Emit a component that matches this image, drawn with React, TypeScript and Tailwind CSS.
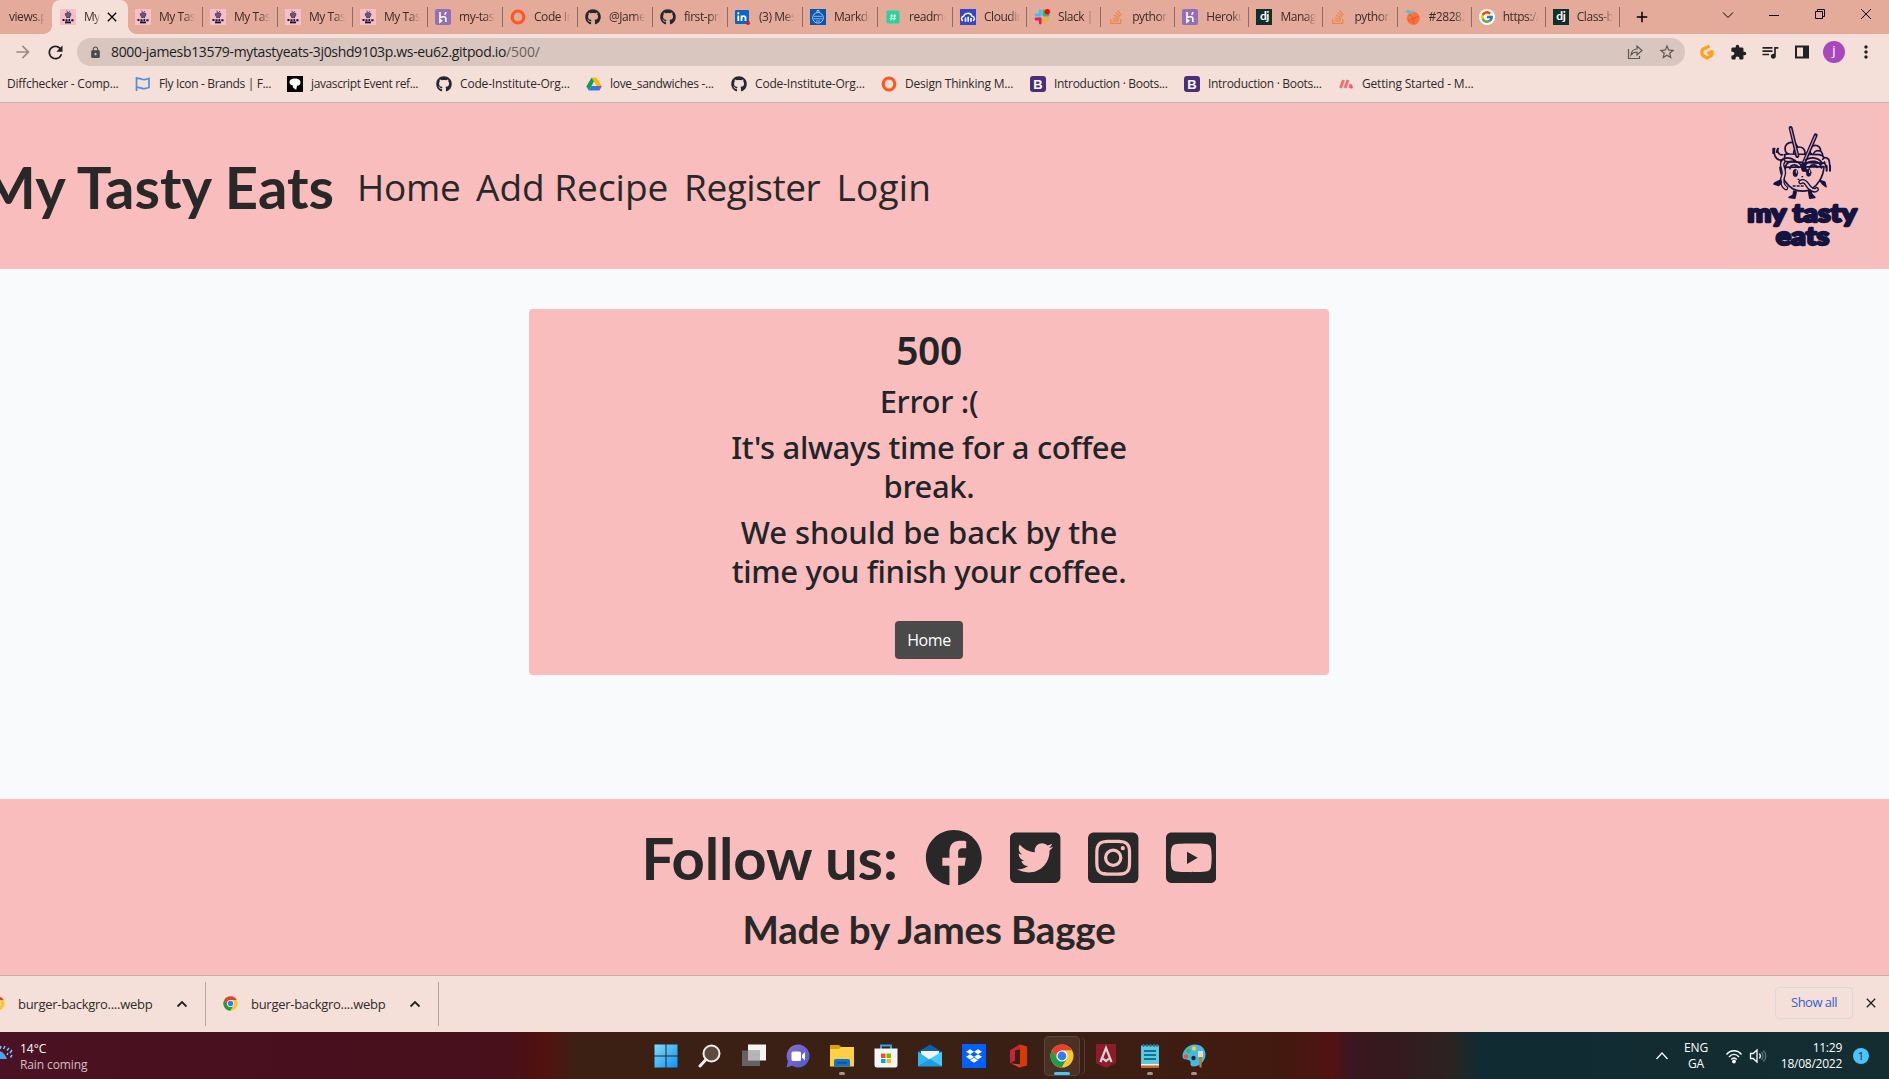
import React from "react";
import { FaFacebook, FaTwitterSquare, FaInstagramSquare, FaYoutubeSquare, FaGithub, FaStackOverflow, FaDropbox } from "react-icons/fa";
import { FcGoogle } from "react-icons/fc";
import { MdRefresh, MdArrowForward, MdLock, MdStarOutline, MdQueueMusic, MdMoreVert, MdAdd, MdClose, MdExtension } from "react-icons/md";

const NAVY = "#15133f";

/* ---------- Brand logo ---------- */

function NoodleBowl() {
  return (
    <g fill="none" stroke={NAVY} strokeLinecap="round" strokeLinejoin="round">
      <g fill="#f5bfbf" strokeWidth="5">
        <circle cx="154" cy="92" r="19" />
        <circle cx="178" cy="104" r="17" />
        <circle cx="226" cy="98" r="16" />
        <circle cx="234" cy="112" r="14" />
        <path d="M122 130c0-14 12-24 26-22l90 2c12 2 20 12 16 26z" />
        <path d="M248 124c6-10 20-4 20 8l2 14M244 138c6-6 14-2 14 10" />
        <path d="M104 92c-4 16 2 32 16 34 10 2 16-6 14-14M112 96c2 12 10 16 16 14" />
      </g>
      <path d="M100 92v14M114 92l-4 10M260 144v14M270 144v14" strokeWidth="6" />
      <path d="M152 30l20 84M227 52l-36 84" strokeWidth="12" />
      <path d="M152 32l20 80M226 54l-34 78" stroke="#d99aa5" strokeWidth="3.5" />
      <path d="M120 148c2 32 24 56 38 64 18 10 44 10 58 0 16-10 34-34 36-66z" fill="#f5bfbf" strokeWidth="5" />
      <path d="M136 152c0-22 30-32 46-12l6 18 8-16c14-20 46-14 48 8M150 152c0-12 18-16 26-4M208 150c4-12 20-12 24-2M122 128c14-12 30-10 44 0M196 126c18-10 38-8 50 8" strokeWidth="5" />
      <path d="M184 140l6 20h10l-4-22z" fill={NAVY} strokeWidth="3" />
      <ellipse cx="166" cy="165" rx="7" ry="11" fill={NAVY} strokeWidth="2" />
      <ellipse cx="206" cy="164" rx="7" ry="11" fill={NAVY} strokeWidth="2" />
      <path d="M169 158v7M209 157v7" stroke="#f5bfbf" strokeWidth="3" />
      <path d="M186 176h2M174 184h3M178 190l8-4" strokeWidth="4" />
      <path d="M130 130c-12 14 8 26 0 42-6 14-4 32 8 38" strokeWidth="14" />
      <path d="M130 130c-12 14 8 26 0 42-6 14-4 32 8 38" stroke="#f5bfbf" strokeWidth="6" />
      <path d="M182 192c14-8 18 8 26 16 8 8 16 12 22 6" strokeWidth="14" />
      <path d="M182 192c14-8 18 8 26 16 8 8 16 12 22 6" stroke="#f5bfbf" strokeWidth="6" />
      <path d="M160 204h36" strokeWidth="5" strokeDasharray="5 7" />
      <path d="M122 186l-16 8-4 4 14 4 8-8zM240 188l10 12 8 6-4-14z" fill={NAVY} strokeWidth="5" />
      <path d="M162 220l-2 12-12 6 16 2 4-18zM206 218l4 22 14-2-10-10-2-10z" fill={NAVY} strokeWidth="6" />
    </g>
  );
}

function BrandLogo() {
  return (
    <div className="h-[152px] w-[150px] bg-[#f5bfbf] pt-2 pl-[13px]">
      <svg viewBox="0 0 378 405" className="h-[135px] w-[126px]">
        <NoodleBowl />
        <g fill={NAVY} stroke={NAVY} strokeWidth="7" strokeLinejoin="round" fontFamily="Lato, sans-serif" fontWeight="900" fontSize="76">
          <text x="22" y="311" textLength="328" lengthAdjust="spacingAndGlyphs">my tasty</text>
          <text x="107" y="380" textLength="161" lengthAdjust="spacingAndGlyphs">eats</text>
        </g>
      </svg>
    </div>
  );
}

/* ---------- Favicons ---------- */

const TastyIcon = () => (
  <svg viewBox="0 0 16 16" className="size-4">
    <path d="M0 0h16v16H0z" fill="#f5bfc4" />
    <path d="M6.800 1.500 7.800 4M9.800 2 8.300 4M5.200 4.800l1.400-.8 1.800.3 2-.3.600 1.200-.8 2.300-1.400.8H7.200L5.800 7.200z" fill="#6c5683" stroke="#4a3a66" strokeWidth=".8" />
    <path d="M6.500 8.600h1M8.800 8.600h1" stroke={NAVY} />
    <path d="M2.500 11h2M5.500 11.300h2M8.500 11h1.600M11.300 11.300h2.200" stroke={NAVY} strokeWidth="1.900" />
    <path d="M5 13.400h6" stroke={NAVY} strokeWidth="1.900" />
  </svg>
);
const HerokuIcon = () => (
  <svg viewBox="0 0 16 16" className="size-4">
    <rect width="16" height="16" rx="2" fill="#9270b8" />
    <path d="M5 3v5.600c2-1 5.800-1.500 5.800 1V13M10.800 3c0 1.200-.4 2-1.200 2.800M5 10.500V13l1.500-1.200z" stroke="#fff" strokeWidth="1.600" fill="none" />
  </svg>
);
const RingIcon = () => (
  <svg viewBox="0 0 16 16" className="size-4">
    <ellipse cx="8" cy="8" rx="5.800" ry="6" fill="none" stroke="#ff5722" strokeWidth="3.200" />
  </svg>
);
const GithubIcon = () => <FaGithub className="size-4 text-[#24292f]" />;
const LinkedinIcon = () => (
  <svg viewBox="0 0 16 16" className="size-4">
    <rect y="1" width="14" height="14" rx="1" fill="#0a66c2" />
    <path d="M3.300 6.500V12M6.500 12V6.500M6.500 9c0-2.600 4-2.600 4 0v3" stroke="#fff" strokeWidth="1.800" fill="none" />
    <circle cx="3.300" cy="4.300" r="1.100" fill="#fff" />
    <circle cx="13" cy="14" r="2" fill="#e0131a" />
  </svg>
);
const MarkdownIcon = () => (
  <svg viewBox="0 0 16 16" className="size-4">
    <path d="M0 0h16v16H0z" fill="#0b56ad" />
    <g fill="none" stroke="#a9cdf2">
      <circle cx="8" cy="8.800" r="5.300" />
      <path d="M4 7.300h8M4 9.800h8M6 12h4" strokeWidth=".8" />
      <path d="M7 3.300V1.500h2v1.800" />
    </g>
  </svg>
);
const HashIcon = () => (
  <svg viewBox="0 0 16 16" className="size-4">
    <rect x="1.500" y="1.500" width="13" height="13" rx="1.500" fill="#2fd09a" />
    <path d="M7 5 6 11.500M10 5 9 11.500M5 7h6M4.800 9.600h6" stroke="#c9ffe9" fill="none" />
  </svg>
);
const CloudinaryIcon = () => (
  <svg viewBox="0 0 16 16" className="size-4">
    <path d="M0 0h16v16H0z" fill="#3448c5" />
    <path d="M3 11.800C.7 10.800 1 7.600 3.600 7.200 4.500 3.800 10.600 3 11.800 7c3 .4 3.300 4 1.200 4.800" fill="none" stroke="#fff" strokeWidth="1.400" />
    <path d="M5.500 8.500v4.300M8.200 7.800v5M11 9v3.800" stroke="#fff" strokeWidth="1.600" />
  </svg>
);
const SlackIcon = () => (
  <svg viewBox="0 0 16 16" className="size-4" strokeWidth="2.800" strokeLinecap="round">
    <path d="M6.200 2v4M2 6h4" stroke="#36c5f0" />
    <path d="M10 2v4M10 6h4" stroke="#2eb67d" />
    <path d="M10 10v4M10 10h4" stroke="#ecb22e" />
    <path d="M6.200 10v4M2 10h4" stroke="#e01e5a" />
    <circle cx="13.300" cy="2.700" r="2.700" fill="#f00" stroke="none" />
  </svg>
);
const StackIcon = () => <FaStackOverflow className="size-4 text-[#ee8746]" />;
const DjangoIcon = () => (
  <span className="flex size-4 items-center justify-center bg-[#12302b] pb-0.5 font-['Lato'] text-[12px] leading-none font-bold text-white">dj</span>
);
const OrangeIcon = () => (
  <svg viewBox="0 0 16 16" className="size-4">
    <circle cx="8.300" cy="9.300" r="6.500" fill="#ff6f3d" />
    <path d="M8.300 9.300 4 5M8.300 9.300l5.500-2M8.300 9.300 9 15.500M8.300 9.300 3 12" stroke="#e35b2c" />
    <path d="M1 2c3-1 6 0 7 2.400C5 5 2 4.500 1 2zM7.500 3 9 .5" fill="#6bb8c9" stroke="#6bb8c9" strokeWidth=".8" />
  </svg>
);
const GoogleIcon = () => (
  <span className="flex size-4 items-center justify-center rounded-full bg-white"><FcGoogle className="size-3.5" /></span>
);
const FlyIcon = () => (
  <svg viewBox="0 0 16 16" className="size-4">
    <path d="M1.500 1v14M1.500 2.500c3.500-1 5.500 1.500 8 1.200 1.500-.2 3-.7 4.500-1.200v9c-1.500.5-3 1-4.500 1.200-2.500.3-4.500-1.700-8-1.200" fill="none" stroke="#4f8fd8" strokeWidth="1.700" />
  </svg>
);
const JsEventIcon = () => (
  <svg viewBox="0 0 16 16" className="size-4">
    <path d="M0 0h16v16H0z" />
    <path d="M2.500 6.500c0-3 2.500-4 5.500-4s5.500 1 5.500 4c0 2.500-1.500 3.200-3.500 3.200L9.200 14 6 11.500 5.500 9.300C3.500 9 2.500 8 2.500 6.500z" fill="#fff" />
  </svg>
);
const DriveIcon = () => (
  <svg viewBox="0 0 16 16" className="size-4">
    <path d="M5.600 1.500h4.800L15.700 10h-5z" fill="#ffba00" />
    <path d="M5.600 1.500.3 10.500l2.500 4L8 5.500z" fill="#0f9d58" />
    <path d="M5.200 10h10.500l-2.400 4.500H2.800z" fill="#2f75f0" />
    <path d="m12.200 12.300 1 2.200 2.500-4.500z" fill="#ea4335" />
  </svg>
);
const BootstrapIcon = () => (
  <span className="flex size-4 items-center justify-center rounded-[3px] bg-[#4a2e78] font-['Liberation_Sans'] text-[13px] leading-none font-bold text-white">B</span>
);
const MaterialIcon = () => (
  <svg viewBox="0 0 16 16" className="size-4">
    <path d="m2.500 12 3-8M7 12l3-8M12 12l1-4" stroke="#f4717c" strokeWidth="3" />
    <circle cx="13.500" cy="11" r="1.500" fill="#ee5a66" />
  </svg>
);
const ChromeIcon = ({ className }: { className: string }) => (
  <svg viewBox="0 0 24 24" className={className}>
    <circle cx="12" cy="12" r="11.500" fill="#fcc62c" />
    <path d="M2 6.300A11.500 11.500 0 0 1 22 6.300H12L7 14.500z" fill="#e8402f" />
    <path d="M2 6.300A11.500 11.500 0 0 0 11.600 23.500L16.800 14.700 12 17l-5-2.500z" fill="#229b49" />
    <circle cx="12" cy="12" r="5.600" fill="#fff" />
    <circle cx="12" cy="12" r="4.400" fill="#2f7df0" />
  </svg>
);

/* ---------- Browser chrome ---------- */

type Tab = { icon: React.FC; text: string; width: string };
const wide = "w-[75px]";
const narrow = "w-[74.1px]";
const tabs: Tab[] = [
  { icon: TastyIcon, text: "My Tasty", width: wide },
  { icon: TastyIcon, text: "My Tasty", width: wide },
  { icon: TastyIcon, text: "My Tasty", width: wide },
  { icon: TastyIcon, text: "My Tasty", width: wide },
  { icon: HerokuIcon, text: "my-tasty", width: wide },
  { icon: RingIcon, text: "Code In", width: wide },
  { icon: GithubIcon, text: "@James", width: wide },
  { icon: GithubIcon, text: "first-pro", width: wide },
  { icon: LinkedinIcon, text: "(3) Mes", width: wide },
  { icon: MarkdownIcon, text: "Markdo", width: wide },
  { icon: HashIcon, text: "readme", width: wide },
  { icon: CloudinaryIcon, text: "Cloudin", width: narrow },
  { icon: SlackIcon, text: "Slack |", width: narrow },
  { icon: StackIcon, text: "python", width: narrow },
  { icon: HerokuIcon, text: "Heroku", width: narrow },
  { icon: DjangoIcon, text: "Manage", width: narrow },
  { icon: StackIcon, text: "python", width: narrow },
  { icon: OrangeIcon, text: "#28282", width: narrow },
  { icon: GoogleIcon, text: "https://", width: narrow },
  { icon: DjangoIcon, text: "Class-b", width: narrow },
];

function TabStrip() {
  return (
    <div className="flex h-[34px] w-full shrink-0 items-stretch bg-[#e4ab9a] text-[12px] tracking-[-0.45px] text-[#3c2b28]">
      <div className="flex w-[52px] items-center pl-[9px]">
        <span className="w-[36px] overflow-hidden mask-r-from-70% whitespace-nowrap">views.py</span>
      </div>
      <div className="relative flex w-[76px] items-center rounded-t-[8px] bg-[#f5e0d9] pl-2">
        <span className="absolute bottom-0 -left-2 size-2 bg-[radial-gradient(circle_at_0_0,transparent_7.5px,#f5e0d9_8px)]" />
        <span className="absolute -right-2 bottom-0 size-2 bg-[radial-gradient(circle_at_100%_0,transparent_7.5px,#f5e0d9_8px)]" />
        <TastyIcon />
        <span className="ml-2 w-4 overflow-hidden mask-r-from-70% whitespace-nowrap">My Tasty</span>
        <MdClose className="ml-1 size-4 text-black" />
      </div>
      {tabs.map(({ icon: Icon, text, width }, i) => (
        <div key={i} className={`flex shrink-0 items-center pl-[7px] ${width}`}>
          <Icon />
          <span className="ml-2 w-[36px] overflow-hidden mask-r-from-70% whitespace-nowrap">{text}</span>
          <span className="ml-auto h-5 w-px bg-[#8f6c62]" />
        </div>
      ))}
      <div className="flex flex-1 items-center text-black">
        <MdAdd className="ml-[13px] size-[18px]" />
        <svg viewBox="0 0 12 12" className="mb-1 ml-[71px] size-3" fill="none" stroke="currentColor"><path d="m1 3.500 5 5 5-5" /></svg>
        <span className="mb-1 ml-[35px] h-px w-[10px] bg-black" />
        <svg viewBox="0 0 12 12" className="mb-1.5 ml-[35px] size-3" fill="none" stroke="currentColor"><path d="M1.500 3.500h7v7h-7zM3.500 3V1.500h7v7H9" /></svg>
        <svg viewBox="0 0 12 12" className="mb-1.5 ml-[34px] size-3" fill="none" stroke="currentColor"><path d="m1 1 10 10M11 1 1 11" /></svg>
      </div>
    </div>
  );
}

function AddressBar() {
  return (
    <div className="flex h-9 shrink-0 items-center text-[#202124]">
      <MdArrowForward className="ml-[13px] size-5 text-[#9b8a85]" />
      <MdRefresh className="ml-3 size-[21px]" />
      <div className="ml-[11px] flex h-7 w-[1608px] items-center rounded-full bg-[#d8c6bf] text-[14px]">
        <MdLock className="ml-3 size-[13px] text-[#4a4a4d]" />
        <span className="mb-0.5 ml-[9px] tracking-[-0.34px]">8000-jamesb13579-mytastyeats-3j0shd9103p.ws-eu62.gitpod.io</span>
        <span className="mb-0.5 tracking-[-0.1px] text-[#6a605d]">/500/</span>
        <svg viewBox="0 0 16 16" className="mr-[15px] ml-auto size-4 text-[#5f5653]" fill="none" stroke="currentColor" strokeWidth="1.200">
          <path d="M1.500 5v9.500h11V12M4 11c.5-4 3-6 6-6V2l5 4.500-5 4.500V8C7.500 8 5.500 9 4 11z" />
        </svg>
        <MdStarOutline className="mr-[9px] size-[18px] text-[#5f5653]" />
      </div>
      <svg viewBox="0 0 16 16" className="ml-3.5 size-4" fill="none" stroke="#ff9f1c" strokeWidth="3.200" strokeLinejoin="round">
        <path d="M10.500 2 4 5.200a2 2 0 0 0-1 1.700V10c0 .8.300 1.300 1 1.700L8 14l4-2.200c.7-.4 1-.9 1-1.600V7.500L8.500 9.500" />
      </svg>
      <MdExtension className="ml-[15px] size-[17px]" />
      <MdQueueMusic className="ml-[13px] size-5" />
      <svg viewBox="0 0 16 16" className="ml-[14px] size-4"><path d="M1 1.500h14v13H1z" fill="currentColor" /><path d="M3 3.500h6v9H3z" fill="#f5e0d9" /></svg>
      <span className="ml-[13px] flex size-[22px] items-center justify-center rounded-full bg-[#ab47bc] pb-0.5 text-[13px] text-white">j</span>
      <MdMoreVert className="ml-[11px] size-5" />
    </div>
  );
}

const bookmarks: { icon: React.FC; text: string; width: string; tracking: string }[] = [
  { icon: FlyIcon, text: "Fly Icon - Brands | F...", width: "w-[152px]", tracking: "tracking-[-0.35px]" },
  { icon: JsEventIcon, text: "javascript Event ref...", width: "w-[149px]", tracking: "tracking-[-0.38px]" },
  { icon: GithubIcon, text: "Code-Institute-Org...", width: "w-[150px]", tracking: "tracking-[-0.17px]" },
  { icon: DriveIcon, text: "love_sandwiches -...", width: "w-[145px]", tracking: "tracking-[-0.3px]" },
  { icon: GithubIcon, text: "Code-Institute-Org...", width: "w-[150px]", tracking: "tracking-[-0.17px]" },
  { icon: RingIcon, text: "Design Thinking M...", width: "w-[149px]", tracking: "tracking-[-0.2px]" },
  { icon: BootstrapIcon, text: "Introduction · Boots...", width: "w-[154px]", tracking: "tracking-[-0.3px]" },
  { icon: BootstrapIcon, text: "Introduction · Boots...", width: "w-[154px]", tracking: "tracking-[-0.3px]" },
  { icon: MaterialIcon, text: "Getting Started - M...", width: "w-[150px]", tracking: "tracking-[-0.17px]" },
];

function BookmarksBar() {
  return (
    <div className="flex h-8 shrink-0 items-center pb-1 text-[12px] whitespace-nowrap text-[#2a2a2d]">
      <span className="w-[135px] pl-[7px] tracking-[-0.22px]">Diffchecker - Comp...</span>
      {bookmarks.map(({ icon: Icon, text, width, tracking }, i) => (
        <div key={i} className={`flex items-center gap-2 ${width}`}>
          <span className="shrink-0"><Icon /></span>
          <span className={tracking}>{text}</span>
        </div>
      ))}
    </div>
  );
}

/* ---------- Page ---------- */

function SiteHeader() {
  return (
    <header className="flex h-[166px] shrink-0 items-center bg-[#fabdbd] text-[#282828]">
      <h1 className="mt-0.5 -ml-[19px] w-[376px] font-['Lato'] text-[58px] leading-none font-bold whitespace-nowrap">My Tasty Eats</h1>
      <nav className="flex items-center text-[37px] leading-none whitespace-nowrap">
        <a className="w-[119px] tracking-[-0.3px]">Home</a>
        <a className="w-[208px]">Add Recipe</a>
        <a className="w-[152.5px] tracking-[-0.45px]">Register</a>
        <a className="tracking-[0.2px]">Login</a>
      </nav>
      <div className="mr-3 ml-auto"><BrandLogo /></div>
    </header>
  );
}

function ErrorCard() {
  return (
    <section className="mx-auto mt-10 mr-[560px] flex h-[366px] w-[800px] flex-col items-center rounded-[4px] bg-[#fabdbd] text-center font-['Noto_Sans'] text-[31px] leading-[39px] font-medium tracking-[-0.35px] whitespace-nowrap text-[#212529]">
      <h1 className="mt-[18px] text-[39px] leading-[46px] font-semibold tracking-[-0.4px]">500</h1>
      <h2 className="mt-[9px] tracking-[-0.3px]">Error :(</h2>
      <h2 className="mt-[7px]">It's always time for a coffee<br />break.</h2>
      <h2 className="mt-[7px]"><span className="tracking-[-0.05px]">We should be back by the</span><br />time you finish your coffee.</h2>
      <button className="mt-[30px] h-[38px] w-[68px] rounded-[4px] bg-[#4a4a4a] font-['Open_Sans'] text-[16px] leading-none font-normal tracking-[-0.4px] text-white">Home</button>
    </section>
  );
}

function SiteFooter() {
  return (
    <footer className="flex h-[176px] shrink-0 flex-col items-center bg-[#fabdbd] pr-[31px] font-['Lato'] font-bold text-[#282828]">
      <div className="mt-[30px] flex h-[58px] items-center gap-[27.5px] text-[57.6px] leading-none">
        <span className="text-[58px] tracking-[-0.17px] whitespace-nowrap">Follow us:</span>
        <FaFacebook className="w-[57.6px]" />
        <FaTwitterSquare className="w-[50.4px]" />
        <FaInstagramSquare className="w-[50.4px]" />
        <FaYoutubeSquare className="w-[50.4px]" />
      </div>
      <p className="mt-[23px] text-[38.5px] leading-none tracking-[-0.15px] whitespace-nowrap">Made by James Bagge</p>
    </footer>
  );
}

/* ---------- Downloads and taskbar ---------- */

function Download() {
  return (
    <div className="flex h-11 w-[233px] shrink-0 items-center border-r border-[#b5a59f]">
      <ChromeIcon className="mb-0.5 ml-[17px] size-[15px] shrink-0" />
      <span className="mt-0.5 ml-[13px] text-[13px] tracking-[-0.28px] whitespace-nowrap text-[#2f2b2b]">burger-backgro....webp</span>
      <svg viewBox="0 0 12 12" className="mr-[17px] ml-auto size-3" fill="none" stroke="#222" strokeWidth="1.800"><path d="m1.500 8.500 4.500-4.500 4.500 4.500" /></svg>
    </div>
  );
}

function DownloadBar() {
  return (
    <div className="flex h-[57px] shrink-0 items-center border-t border-[#c9aeab] bg-[#f5e0d9]">
      <div className="-ml-[27px]"><Download /></div>
      <Download />
      <button className="mb-0.5 ml-auto h-8 w-[78px] rounded-[4px] border border-[#d9d8dc] text-[13px] tracking-[-0.55px] text-[#2f62c9]">Show all</button>
      <MdClose className="mr-[10px] mb-0.5 ml-[10px] size-4 text-[#202124]" />
    </div>
  );
}

const I = "size-6";
const taskIcons: { art: React.ReactNode; dot?: boolean }[] = [
  { art: <svg viewBox="0 0 24 24" className={I}><defs><linearGradient id="w" x2="1" y2="1"><stop stopColor="#7fdcff" /><stop offset="1" stopColor="#0b93f6" /></linearGradient></defs><path d="M.5.500h11v11H.5zM12.500.500h11v11h-11zM.5 12.500h11v11H.5zM12.500 12.500h11v11h-11z" fill="url(#w)" /></svg> },
  { art: <svg viewBox="0 0 24 24" className={I}><circle cx="13.500" cy="9.500" r="8" fill="#5f4a42" stroke="#f2efee" strokeWidth="2" /><path d="m8 15.500-6 6.500" stroke="#f2efee" strokeWidth="3" strokeLinecap="round" /></svg> },
  { art: <svg viewBox="0 0 24 24" className={I}><path d="M6 .500h18v16H6z" fill="#f4f4f4" /><path d="M0 6.500h18v15.500H0z" fill="#6e6e6e" fillOpacity=".85" /><path d="M6 6.500h12v10H6z" fill="#b5b5b5" /></svg> },
  { art: <svg viewBox="0 0 24 24" className={I}><defs><linearGradient id="t" x2="1" y2="1"><stop stopColor="#8a6fd0" /><stop offset="1" stopColor="#4a5bd0" /></linearGradient></defs><path d="M12 .500a11.500 11.500 0 1 1-6 21.300L.5 23.500 2 17.500A11.500 11.500 0 0 1 12 .500z" fill="url(#t)" /><rect x="5.500" y="7.500" width="9.500" height="9.500" rx="1.500" fill="#fff" /><path d="m16 11 3-3v8.500l-3-3z" fill="#fff" /></svg> },
  { art: <svg viewBox="0 0 24 24" className={I}><path d="M0 1h9l2 2v4H0z" fill="#e0a008" /><path d="M0 5h9l2-2h13v19.500H0z" fill="#ffcf48" /><path d="M4 22.500V17a2 2 0 0 1 2-2h12a2 2 0 0 1 2 2v5.500z" fill="#1272c4" /><path d="M7 18h10v1.500H7z" fill="#0a4f93" /></svg>, dot: true },
  { art: <svg viewBox="0 0 24 24" className={I}><path d="M7 6V1.500h10V6" fill="none" stroke="#2aa7e8" strokeWidth="2" /><path d="M.5 4.500h23V21a2.500 2.500 0 0 1-2.500 2.500H3A2.500 2.500 0 0 1 .5 21z" fill="#f5f5f5" /><path d="M7 9.500h4.500V14H7z" fill="#f25022" /><path d="M12.500 9.500H17V14h-4.500z" fill="#7fba00" /><path d="M7 15h4.500v4H7z" fill="#00a4ef" /><path d="M12.500 15H17v4h-4.500z" fill="#ffb900" /></svg> },
  { art: <svg viewBox="0 0 24 24" className={I}><path d="M0 8 12 .500 24 8v5H0z" fill="#0b60b0" /><path d="M3 7h18v9H3z" fill="#f3f3f3" /><path d="m0 7.500 12 8.500-12 6.500z" fill="#2eb5ef" /><path d="M24 7.500v15L10 16z" fill="#49c8f7" /><path d="M24 22.500 12 15 0 22.500z" fill="#1a9be2" /></svg> },
  { art: <span className="flex size-6 items-center justify-center bg-[#0061ff]"><FaDropbox className="size-4 text-white" /></span> },
  { art: <svg viewBox="0 0 24 24" className={I}><path d="m14 .500 7 2v19l-7 2-9-4 9 1V5L9 6.500v10L4 19V6.500z" fill="#d83b01" /><path d="M14 .500v4.500L9 6.500v10L4 19V6.500z" fill="#c3263c" /><path d="m5 19.500 9 1v3z" fill="#f03a3a" /></svg> },
  { art: null },
  { art: <svg viewBox="0 0 24 24" className={I}><path d="M2 0h20v19l-10 5-10-5z" fill="#8c1c2b" /><path d="m6.500 18 5.500-14 5.500 14M9 14.500l3 2.500 3-2.500" fill="none" stroke="#dcd5d6" strokeWidth="2.200" /></svg> },
  { art: <svg viewBox="0 0 24 24" className={I}><path d="M3 1.500h18V21H3z" fill="#5cc8e2" /><path d="M3 20h18v4H3z" fill="#c96a18" /><path d="M3 20h18v1.500H3z" fill="#f5f1ec" /><path d="M6 7h12M6 11h12M6 15h12" stroke="#12748f" strokeWidth="2" /><path d="M5.500 0v3M9 0v3M12.500 0v3M16 0v3M19 0v3" stroke="#1c7c98" strokeWidth="1.500" /></svg>, dot: true },
  { art: <svg viewBox="0 0 24 24" className={I}><path d="M13 .500c6 0 10.500 4 10.500 10S18 22.500 11.500 22.500c-5 0-1.500-4.500-4-6S.5 16.500.5 12 5 .500 13 .500z" fill="#3fbbe8" /><circle cx="12" cy="4.500" r="2.200" fill="#ffc928" /><circle cx="6.500" cy="7" r="2.200" fill="#4caf50" /><circle cx="4" cy="12.500" r="2.200" fill="#e8553c" /><circle cx="11.500" cy="14" r="2.200" fill="#3b2014" /><path d="M16 7h5v6h-5z" fill="#f2d8b0" /><path d="M17 13h3l-.5 10.500h-2z" fill="#c47a26" /></svg>, dot: true },
];

function Taskbar() {
  return (
    <div className="flex h-[47px] shrink-0 items-center bg-[linear-gradient(90deg,#4a1222_0px,#48101d_450px,#47101a_510px,#52120f_545px,#3c2014_578px,#3a2014_1040px,#43190f_1290px,#521212_1333px,#3c1620_1350px,#35191f_1390px,#2c2321_1450px,#112b33_1478px,#132d31_1889px)] text-[12px] leading-4 text-white">
      <div className="flex w-[644px] items-center overflow-hidden">
        <svg viewBox="0 0 24 24" className="mb-1 -ml-[11px] size-6 shrink-0"><path d="M0 17c0-5 4-8 8-8s7 1 10 8z" fill="#4da3ee" /><path d="m12 4-1 3M16 4l-1.500 3M20 6l-2 2.500M23 8l-2 3M23 13l-1.500 2.500M19 11l-1 2" stroke="#7fc4f5" strokeWidth="1.500" /></svg>
        <div className="mt-0.5 ml-[7px]">
          <div>14°C</div>
          <div className="tracking-[-0.1px] text-[#d5bfc5]">Rain coming</div>
        </div>
      </div>
      {taskIcons.map(({ art, dot }, i) => (
        <div key={i} className="relative flex h-full w-11 shrink-0 items-center justify-center">
          {art ?? (
            <span className="relative flex h-10 w-9 items-center justify-center rounded-[5px] border border-white/10 bg-white/8">
              <span className="absolute top-0 -right-1.5 h-[38px] w-2 rounded-r-[5px] border-r border-white/15" />
              <ChromeIcon className="size-6" />
              <span className="absolute bottom-0 h-[3px] w-4 rounded-full bg-[#4cc2ff]" />
            </span>
          )}
          {dot && <span className="absolute bottom-1 h-[3px] w-1.5 rounded-full bg-[#a09490]" />}
        </div>
      ))}
      <div className="ml-auto flex items-center">
        <svg viewBox="0 0 12 12" className="size-3" fill="none" stroke="#fff" strokeWidth="1.200"><path d="m.5 9 5.500-6 5.500 6" /></svg>
        <div className="mt-px ml-4 w-6 text-center tracking-[-0.2px]">ENG<br />GA</div>
        <svg viewBox="0 0 18 16" className="ml-[17px] h-4 w-[18px]" fill="none" stroke="#fff" strokeWidth="1.400"><path d="M1.500 6.500c4-5 11-5 15 0M4 9c3-3.500 7-3.500 10 0M6.300 11.500c1.600-2 3.800-2 5.400 0" /><circle cx="9" cy="13.500" r="1.200" fill="#fff" /></svg>
        <svg viewBox="0 0 18 16" className="ml-[6px] h-4 w-[18px]" fill="none" stroke="#fff" strokeWidth="1.300"><path d="M1.500 5.500h2.700L8 2v12l-3.800-3.500H1.500zM10.500 5.500c1 1.500 1 3.500 0 5" /><path d="M12.500 4c2 2.500 2 5.500 0 8M14.500 2.500c3 3.500 3 7.500 0 11" stroke="#5f7376" /></svg>
        <div className="ml-[13px] w-[62px] text-right tracking-[-0.25px]">11:29<br />18/08/2022</div>
        <span className="mr-5 ml-[11px] flex size-4 items-center justify-center rounded-full bg-[#4cc2ff] text-[11px] text-[#10303a]">1</span>
      </div>
    </div>
  );
}

export default function App() {
  return (
    <div className="flex h-[1079px] w-[1889px] flex-col overflow-hidden bg-[#f8fafc] font-['Open_Sans',sans-serif]">
      <TabStrip />
      <div className="flex h-[69px] shrink-0 flex-col border-b border-[#c0b4af] bg-[#f5e0d9]">
        <AddressBar />
        <BookmarksBar />
      </div>
      <SiteHeader />
      <main className="flex-1"><ErrorCard /></main>
      <SiteFooter />
      <DownloadBar />
      <Taskbar />
    </div>
  );
}
